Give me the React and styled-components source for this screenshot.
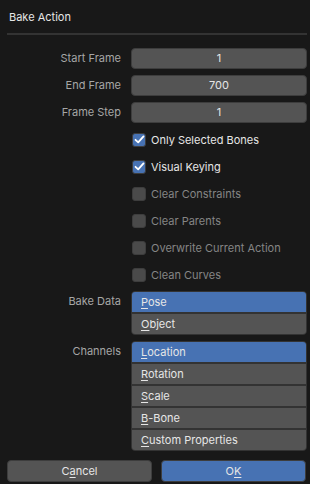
import React from 'react';
import styled, { createGlobalStyle } from 'styled-components';

const GlobalStyle = createGlobalStyle`
  html, body {
    margin: 0;
    padding: 0;
    background: #181818;
  }
  body {
    font-family: 'Inter', 'DejaVu Sans', sans-serif;
    font-size: 11px;
    color: #e6e6e6;
  }
`;

const Dialog = styled.div`
  width: 310px;
  height: 484px;
  box-sizing: border-box;
  padding: 9px 3px 0 7px;
  background: #181818;
  display: flex;
  flex-direction: column;
`;

const Title = styled.div`
  height: 16px;
  line-height: 16px;
  padding-left: 2px;
  color: #e6e6e6;
`;

const Separator = styled.div`
  height: 2px;
  background: #333333;
  margin: 8px 0 13px;
`;

const Form = styled.div`
  display: grid;
  grid-template-columns: 114px 1fr;
  column-gap: 10px;
  row-gap: 6px;
  align-items: start;
`;

const Label = styled.div`
  height: 21px;
  line-height: 21px;
  text-align: right;
  color: #a6a6a6;
  white-space: nowrap;
`;

const Field = styled.div`
  height: 21px;
  box-sizing: border-box;
  border: 1px solid #3d3d3d;
  border-radius: 4px;
  background: #545454;
  line-height: 19px;
  text-align: center;
  color: #e6e6e6;
`;

const CheckRow = styled.div`
  height: 21px;
  display: flex;
  align-items: center;
  gap: 5px;
  padding-left: 1px;
  color: ${(p) => (p.$on ? '#e6e6e6' : '#858585')};
  white-space: nowrap;
`;

const Box = styled.div`
  width: 14px;
  height: 14px;
  box-sizing: border-box;
  border-radius: 3px;
  border: 1px solid #3d3d3d;
  background: ${(p) => (p.$on ? '#4772b3' : '#4a4a4a')};
  display: flex;
  align-items: center;
  justify-content: center;
`;

const List = styled.div`
  display: flex;
  flex-direction: column;
  gap: 2px;
  border: 1px solid #333333;
  border-radius: 4px;
  background: #333333;
  overflow: hidden;
`;

const Item = styled.div`
  height: 20px;
  line-height: 20px;
  padding-left: 9px;
  background: ${(p) => (p.$on ? '#4772b3' : '#545454')};
  color: #e6e6e6;
`;

const Spacer = styled.div``;

const Buttons = styled.div`
  display: flex;
  gap: 9px;
  margin: 9px 1px 0 0;
`;

const Button = styled.div`
  flex: 1;
  height: 22px;
  box-sizing: border-box;
  border: 1px solid #3d3d3d;
  border-radius: 4px;
  background: ${(p) => (p.$primary ? '#4772b3' : '#545454')};
  line-height: 20px;
  text-align: center;
  color: #e6e6e6;
`;

const U = styled.span`
  text-decoration: underline;
  text-underline-offset: 2px;
  text-decoration-thickness: 1px;
`;

const Check = () => (
  <svg width="11" height="11" viewBox="0 0 11 11">
    <path
      d="M1.5 5.8 L4.2 8.4 L9.5 2.4"
      fill="none"
      stroke="#ffffff"
      strokeWidth="1.8"
      strokeLinecap="round"
      strokeLinejoin="round"
    />
  </svg>
);

const Checkbox = ({ on, children }) => (
  <CheckRow $on={on}>
    <Box $on={on}>{on && <Check />}</Box>
    {children}
  </CheckRow>
);

const Mn = ({ text, at = 0 }) => (
  <>
    {text.slice(0, at)}
    <U>{text[at]}</U>
    {text.slice(at + 1)}
  </>
);

const fields = [
  ['Start Frame', '1'],
  ['End Frame', '700'],
  ['Frame Step', '1'],
];

const checks = [
  ['Only Selected Bones', true],
  ['Visual Keying', true],
  ['Clear Constraints', false],
  ['Clear Parents', false],
  ['Overwrite Current Action', false],
  ['Clean Curves', false],
];

const channels = ['Location', 'Rotation', 'Scale', 'B-Bone', 'Custom Properties'];

const App = () => (
  <>
    <GlobalStyle />
    <Dialog>
      <Title>Bake Action</Title>
      <Separator />
      <Form>
        {fields.map(([label, value]) => (
          <React.Fragment key={label}>
            <Label>{label}</Label>
            <Field>{value}</Field>
          </React.Fragment>
        ))}
        {checks.map(([label, on]) => (
          <React.Fragment key={label}>
            <Spacer />
            <Checkbox on={on}>{label}</Checkbox>
          </React.Fragment>
        ))}
        <Label>Bake Data</Label>
        <List>
          <Item $on>
            <Mn text="Pose" />
          </Item>
          <Item>
            <Mn text="Object" />
          </Item>
        </List>
        <Label>Channels</Label>
        <List>
          {channels.map((c, i) => (
            <Item key={c} $on={i === 0}>
              <Mn text={c} />
            </Item>
          ))}
        </List>
      </Form>
      <Buttons>
        <Button>
          <Mn text="Cancel" at={1} />
        </Button>
        <Button $primary>
          <Mn text="OK" at={1} />
        </Button>
      </Buttons>
    </Dialog>
  </>
);

export default App;
